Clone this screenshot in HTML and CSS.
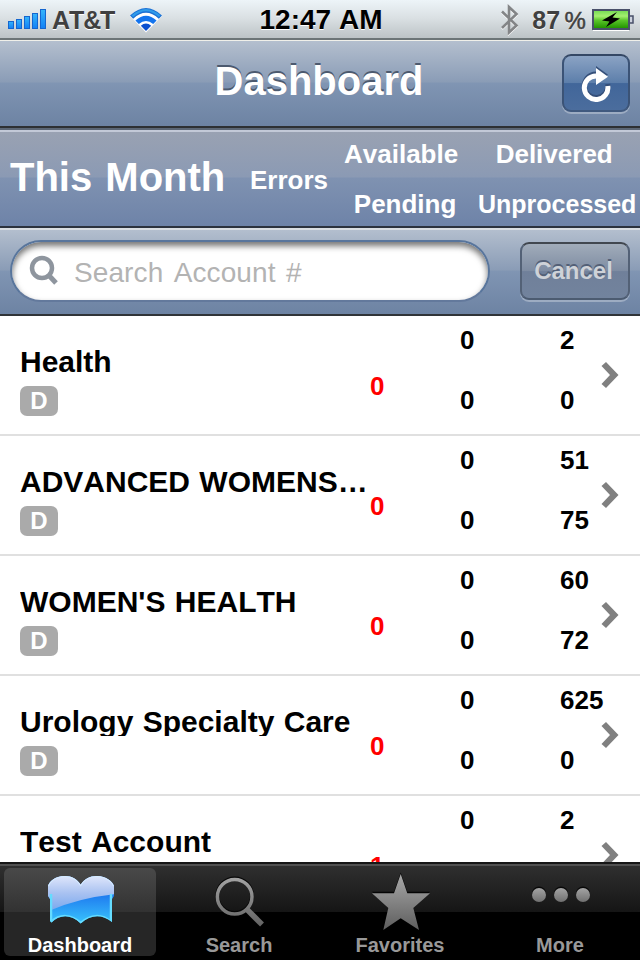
FILE: index.html
```html
<!DOCTYPE html>
<html lang="en">
<head>
	<meta charset="UTF-8">
	<title>Dashboard</title>
	<link rel="stylesheet" href="styles.css">
</head>
<body>
	<div class="screen">
		<div class="status-bar">
			<div class="status-left">
				<svg class="signal" width="38" height="21" viewBox="0 0 38 21">
					<defs>
						<linearGradient id="bar-fill" x1="0" y1="0" x2="0" y2="1">
							<stop offset="0" stop-color="#35b5fb"/>
							<stop offset="1" stop-color="#1280f5"/>
						</linearGradient>
					</defs>
					<g fill="url(#bar-fill)" stroke="#1566cf">
						<rect x=".5" y="12.5" width="5" height="7"/>
						<rect x="8.5" y="10.5" width="5" height="9"/>
						<rect x="16.5" y="7.5" width="5" height="12"/>
						<rect x="24.5" y="4.5" width="5" height="15"/>
						<rect x="32.5" y=".5" width="5" height="19"/>
					</g>
				</svg>
				<span class="carrier">AT&amp;T</span>
				<svg class="wifi" width="32" height="25" viewBox="0 0 32 25">
					<path d="M0 8Q16-7.500 32 8L16 24.500z" fill="#fff"/>
					<path d="M0 7.500Q16-7.500 32 7.500L28.800 10.700Q16-1 3.200 10.700z" fill="#1b70d4"/>
					<path d="M1.500 7.500Q16-5.500 30.500 7.500L28.800 9Q16-2.500 3.200 9z" fill="#2f9bea"/>
					<path d="M5.400 12.500Q16 3 26.600 12.500L23.200 16Q16 10 8.800 16z" fill="#1374ed"/>
					<path d="M10.800 17.800Q16 13 21.200 17.800L16 23z" fill="#0b50cf"/>
				</svg>
			</div>
			<div class="clock">12:47 AM</div>
			<div class="status-right">
				<svg class="bluetooth" width="20" height="32" viewBox="0 0 20 32">
					<path d="M2 7.500l14.500 14-7.500 7V3l7.500 7L2 24" transform="translate(0 1)" fill="none" stroke="#fff" stroke-width="2.400"/>
					<path d="M2 7.500l14.500 14-7.500 7V3l7.500 7L2 24" fill="none" stroke="#838587" stroke-width="2.600"/>
				</svg>
				<span class="charge">87<span class="percent">%</span></span>
				<svg class="battery" width="42" height="22" viewBox="0 0 42 22">
					<defs>
						<linearGradient id="battery-fill" x1="0" y1="0" x2="0" y2="1">
							<stop offset="0" stop-color="#78dc55"/>
							<stop offset=".3" stop-color="#a4ef70"/>
							<stop offset=".55" stop-color="#5bc52a"/>
							<stop offset="1" stop-color="#229500"/>
						</linearGradient>
					</defs>
					<path d="M1 21.5h36" stroke="#fff"/>
					<rect x="1" y="1" width="36" height="19" fill="#eff8e9" stroke="#48506a" stroke-width="2"/>
					<rect x="2" y="2" width="34" height="17" fill="url(#battery-fill)"/>
					<path d="M38 7h3v7h-3" fill="#cdd3df" stroke="#48506a" stroke-width="1.5"/>
					<path d="M25 3L10 11.500l7.500 1L14 18l14-8.500-7.500-1z" fill="#000"/>
				</svg>
			</div>
		</div>

		<div class="nav-bar">
			<h1>Dashboard</h1>
			<button class="button reload" aria-label="Reload">
				<svg width="36" height="38" viewBox="0 0 36 38">
					<g class="reload-shade">
						<path d="M27.8 22A11.8 11.8 0 1 1 16 11.9"/>
						<path class="arrow" d="M16 4l12 8.7L16 21z"/>
					</g>
					<g class="reload-icon">
						<path d="M27.8 22A11.8 11.8 0 1 1 16 11.9"/>
						<path class="arrow" d="M16 4l12 8.7L16 21z"/>
					</g>
				</svg>
			</button>
		</div>

		<div class="summary">
			<h2>This Month</h2>
			<span class="errors-label">Errors</span>
			<div class="labels middle">
				<span>Available</span>
				<span>Pending</span>
			</div>
			<div class="labels last">
				<span>Delivered</span>
				<span>Unprocessed</span>
			</div>
		</div>

		<div class="search-bar">
			<div class="search-field">
				<svg width="32" height="36" viewBox="0 0 32 36">
					<circle cx="13" cy="17" r="10" fill="none" stroke="#8e959e" stroke-width="4.500"/>
					<path d="M19.500 24l7.500 8" stroke="#8e959e" stroke-width="5"/>
				</svg>
				<span class="placeholder">Search Account #</span>
			</div>
			<button class="button cancel">Cancel</button>
		</div>

		<ul class="accounts">
			<li>
				<div class="account"><h3>Health</h3><span class="badge">D</span></div>
				<span class="errors">0</span>
				<div class="counts"><span>0</span><span>0</span></div>
				<div class="counts"><span>2</span><span>0</span></div>
				<svg class="chevron" width="18" height="28" viewBox="0 0 18 28"><path d="M.5 5L5 1 17.500 14 5 27 .5 23 9 14z"/></svg>
			</li>
			<li>
				<div class="account"><h3>ADVANCED WOMENS…</h3><span class="badge">D</span></div>
				<span class="errors">0</span>
				<div class="counts"><span>0</span><span>0</span></div>
				<div class="counts"><span>51</span><span>75</span></div>
				<svg class="chevron" width="18" height="28" viewBox="0 0 18 28"><path d="M.5 5L5 1 17.500 14 5 27 .5 23 9 14z"/></svg>
			</li>
			<li>
				<div class="account"><h3>WOMEN'S HEALTH</h3><span class="badge">D</span></div>
				<span class="errors">0</span>
				<div class="counts"><span>0</span><span>0</span></div>
				<div class="counts"><span>60</span><span>72</span></div>
				<svg class="chevron" width="18" height="28" viewBox="0 0 18 28"><path d="M.5 5L5 1 17.500 14 5 27 .5 23 9 14z"/></svg>
			</li>
			<li>
				<div class="account"><h3>Urology Specialty Care</h3><span class="badge">D</span></div>
				<span class="errors">0</span>
				<div class="counts"><span>0</span><span>0</span></div>
				<div class="counts"><span>625</span><span>0</span></div>
				<svg class="chevron" width="18" height="28" viewBox="0 0 18 28"><path d="M.5 5L5 1 17.500 14 5 27 .5 23 9 14z"/></svg>
			</li>
			<li>
				<div class="account"><h3>Test Account</h3></div>
				<span class="errors">1</span>
				<div class="counts"><span>0</span></div>
				<div class="counts"><span>2</span></div>
				<svg class="chevron" width="18" height="28" viewBox="0 0 18 28"><path d="M.5 5L5 1 17.500 14 5 27 .5 23 9 14z"/></svg>
			</li>
		</ul>

		<div class="tab-bar">
			<div class="tab selected">
				<svg width="72" height="65" viewBox="0 0 72 65">
					<defs>
						<linearGradient id="book-top" gradientUnits="userSpaceOnUse" x1="0" y1="8" x2="0" y2="42">
							<stop offset="0" stop-color="#dfe6fb"/>
							<stop offset=".5" stop-color="#a9c2f1"/>
							<stop offset="1" stop-color="#7aa9ee"/>
						</linearGradient>
						<linearGradient id="book-bottom" gradientUnits="userSpaceOnUse" x1="0" y1="24" x2="0" y2="54">
							<stop offset="0" stop-color="#1c74ee"/>
							<stop offset="1" stop-color="#38c0fc"/>
						</linearGradient>
						<clipPath id="book">
							<path d="M4 18C5 14 11 8 20.700 8C28 8 33 11 36.700 16.700C40 11 46 8 52.700 8C62 8 69 14 70 18V28L68 31V54C58 46 47 46 36.700 55.500C27 46 16 46 7.500 54.500L6 53V31L4 28z"/>
						</clipPath>
					</defs>
					<g clip-path="url(#book)">
						<rect width="72" height="65" fill="url(#book-bottom)"/>
						<path d="M0 0h72v26Q32 30 0 45z" fill="url(#book-top)"/>
						<path d="M7 26V54C16 46 27 46 36.700 55C47 46 58 46 67 54V26" fill="none" stroke="#65dcff" stroke-width="2.500"/>
						<path d="M4 18C5 14 11 8 20.700 8C28 8 33 11 36.700 16.700C40 11 46 8 52.700 8C62 8 69 14 70 18" fill="none" stroke="#d5ebff" stroke-width="2"/>
					</g>
				</svg>
				<span>Dashboard</span>
			</div>
			<div class="tab">
				<svg width="72" height="65" viewBox="0 0 72 65">
					<defs>
						<linearGradient id="gray" gradientUnits="userSpaceOnUse" x1="0" y1="6" x2="0" y2="62">
							<stop offset="0" stop-color="#a8a8a8"/>
							<stop offset="1" stop-color="#5e5e5e"/>
						</linearGradient>
					</defs>
					<circle cx="30.700" cy="27.700" r="17.300" fill="none" stroke="#080808" stroke-width="4"/>
					<g fill="none" stroke="url(#gray)">
						<circle cx="30.700" cy="28.700" r="17.300" stroke-width="3.500"/>
						<path d="M42.500 41L58 56.500" stroke-width="5.500"/>
					</g>
				</svg>
				<span class="search-label">Search</span>
			</div>
			<div class="tab">
				<svg width="72" height="65" viewBox="0 0 72 65">
					<path d="M36.700 4.500L43.300 23.800H66L49.300 40H24.300L8 23.800H30z" fill="#050505"/>
					<path d="M36.700 6L43.300 25.300H66L49.300 40L55 62L36.700 50.300L19.300 62L24.300 40L8 25.300H30z" fill="url(#gray)"/>
				</svg>
				<span>Favorites</span>
			</div>
			<div class="tab">
				<svg width="72" height="65" viewBox="0 0 72 65">
					<defs>
						<linearGradient id="dot" x1="0" y1="0" x2="0" y2="1">
							<stop offset="0" stop-color="#a4a4a4"/>
							<stop offset="1" stop-color="#707070"/>
						</linearGradient>
					</defs>
					<g fill="#080808">
						<circle cx="15" cy="25.500" r="7"/>
						<circle cx="37" cy="25.500" r="7"/>
						<circle cx="59" cy="25.500" r="7"/>
					</g>
					<g fill="url(#dot)">
						<circle cx="15" cy="27" r="7"/>
						<circle cx="37" cy="27" r="7"/>
						<circle cx="59" cy="27" r="7"/>
					</g>
				</svg>
				<span>More</span>
			</div>
		</div>
	</div>
</body>
</html>
```
FILE: styles.css
```css
* {
	box-sizing:border-box;
}

html,body {
	margin:0;
	padding:0;
	background:#000;
	overflow:hidden;
}

body {
	font-family:"Liberation Sans","Helvetica Neue",Helvetica,Arial,sans-serif;
	font-weight:bold;
	font-kerning:none;
}

h1,h2,h3,ul {
	margin:0;
	padding:0;
}

svg {
	display:block;
	flex:none;
}

.screen {
	display:flex;
	flex-direction:column;
	width:640px;
	height:960px;
	overflow:hidden;
}

/* status bar */

.status-bar {
	display:grid;
	grid-template-columns:1fr auto 1fr;
	flex:none;
	height:40px;
	padding:0 6px 0 8px;
	background:linear-gradient(#edf4f8,#d9dfe2 50%,#bcc3c6);
	border-bottom:2px solid #6c7577;
	color:#404040;
	line-height:40px;
	text-shadow:0 1px 0 #fff;
}

.status-left,
.status-right {
	display:flex;
	align-items:flex-start;
}

.status-right {
	justify-content:flex-end;
}

.signal {
	margin-top:9px;
}

.carrier {
	margin-left:6px;
	font-size:25px;
	letter-spacing:-1.1px;
}

.wifi {
	margin:8px 0 0 16px;
}

.clock {
	color:#000;
	font-size:28px;
	line-height:39px;
}

.bluetooth {
	margin-top:4px;
}

.charge {
	margin-left:12px;
	font-size:25px;
	letter-spacing:.2px;
}

.percent {
	margin-left:4px;
	font-size:24px;
	font-weight:normal;
	-webkit-text-stroke:.5px #404040;
}

.battery {
	margin:9px 0 0 6px;
}

/* title */

.nav-bar {
	display:grid;
	grid-template-columns:78px 1fr 68px;
	align-items:start;
	flex:none;
	height:88px;
	padding:14px 10px 0 0;
	background:linear-gradient(#b5c0cf,#8a9cb6 49%,#8095b3 50%,#6d83a3);
	border-bottom:2px solid #2d3033;
	box-shadow:inset 0 1px 0 #f0f0ea;
}

.nav-bar h1 {
	grid-column:2;
	padding-right:2px;
	color:#fff;
	font-size:40px;
	line-height:54px;
	text-align:center;
	text-shadow:0 -2px 0 #4c5a6f;
}

.button {
	display:flex;
	align-items:center;
	justify-content:center;
	height:58px;
	margin:0;
	padding:0;
	border:2px solid #425471;
	border-radius:9px;
	font:inherit;
}

.reload {
	background:linear-gradient(#8ba3c4,#5c7eaa 50%,#41669a 51%,#4b6d9d);
	border-color:#354865 #3b5376 #40597e;
	box-shadow:0 2px 0 rgba(255,255,255,.3);
}

.reload svg {
	margin-top:-1px;
	margin-left:4px;
}

.reload-icon path,
.reload-shade path {
	fill:none;
	stroke:#fff;
	stroke-width:5;
}

.reload-shade {
	transform:translateY(-2px);
}

.reload-shade path {
	stroke:#354f79;
}

.reload-icon .arrow {
	fill:#fff;
	stroke:none;
}

.reload-shade .arrow {
	fill:#354f79;
	stroke:none;
}

/* column headings */

.summary {
	display:grid;
	grid-template-columns:240px 94px 114px 1fr;
	flex:none;
	height:100px;
	padding:0 4px 0 10px;
	background:linear-gradient(#9aa2b2,#8b9ab4 49%,#7f92b1 50%,#6e83a8);
	border-top:2px solid #5b6675;
	border-bottom:2px solid #2c323d;
	box-shadow:inset 0 2px 0 #c3c9d7;
	color:#fff;
	font-size:26px;
}

.summary h2 {
	font-size:40px;
	line-height:95px;
	word-spacing:2px;
}

.errors-label {
	line-height:101px;
}

.labels {
	display:grid;
	grid-template-rows:50px 50px;
	line-height:49px;
	text-align:center;
}

.middle span:last-child {
	padding-left:8px;
}

.last {
	padding-left:20px;
}

.last span:first-child {
	padding-right:6px;
}

.last span:last-child {
	font-size:25px;
	white-space:nowrap;
}

/* search */

.search-bar {
	display:flex;
	flex:none;
	height:88px;
	padding:12px 10px 0;
	background:linear-gradient(#b5c0cf,#8a9cb6 49%,#8095b3 50%,#6d83a3);
	border-bottom:2px solid #303438;
	box-shadow:inset 0 2px 0 #dadee2;
}

.search-field {
	display:flex;
	width:480px;
	height:62px;
	padding:9px 0 0 17px;
	border:2px solid #58759c;
	border-bottom-color:#63799c;
	border-radius:31px;
	background:#fff;
	box-shadow:inset 0 4px 6px rgba(0,0,0,.55);
}

.placeholder {
	margin-left:13px;
	color:#b3b3b3;
	font-size:28px;
	font-weight:normal;
	line-height:44px;
	letter-spacing:.1px;
	word-spacing:2.5px;
}

.cancel {
	width:110px;
	margin:2px 0 0 30px;
	background:linear-gradient(#a1acba,#7e8ca2 50%,#70809a 51%,#72839d);
	border-color:#41474f #536176 #4c5b70;
	box-shadow:0 2px 0 rgba(255,255,255,.3);
	color:#ced2d8;
	font-size:24px;
	text-shadow:0 -2px 0 #536077;
	padding-right:3px;
}

/* accounts */

.accounts {
	flex:1;
	min-height:0;
	background:#fff;
	color:#000;
	font-size:26px;
	list-style-type:none;
	overflow:hidden;
}

.accounts li {
	display:grid;
	grid-template-columns:350px 90px 100px 41px 1fr;
	height:120px;
	padding-left:20px;
	border-bottom:2px solid #e0e0e0;
	line-height:48px;
}

.account {
	padding-top:29px;
}

/* descenders are trimmed just above the badge */
.account h3 {
	font-size:30px;
	line-height:34px;
	word-spacing:1px;
	white-space:nowrap;
	clip-path:inset(0 0 3px);
}

.badge {
	display:block;
	width:38px;
	height:30px;
	margin-top:7px;
	border-radius:7px;
	background:#aaa;
	color:#fff;
	font-size:24px;
	line-height:29px;
	text-align:center;
}

.errors {
	padding-top:46px;
	color:#f00;
}

.counts {
	display:flex;
	flex-direction:column;
	gap:12px;
}

.chevron {
	margin-top:45px;
	fill:#808080;
}

/* tabs */

.tab-bar {
	display:flex;
	flex:none;
	gap:8px;
	height:98px;
	padding:4px 4px 0;
	border-top:2px solid #161616;
	background:linear-gradient(#505050 0,#505050 2px,#2f2f2f 2px,#151515 48px,#000 48px);
}

.tab {
	display:flex;
	flex:1;
	flex-direction:column;
	align-items:center;
	height:88px;
	border-radius:6px;
	color:#999;
	font-size:20px;
	line-height:24px;
}

.search-label {
	padding-right:2px;
}

.selected {
	background:linear-gradient(#494949,#323232 44px,#262626 44px);
	color:#fff;
}
```
